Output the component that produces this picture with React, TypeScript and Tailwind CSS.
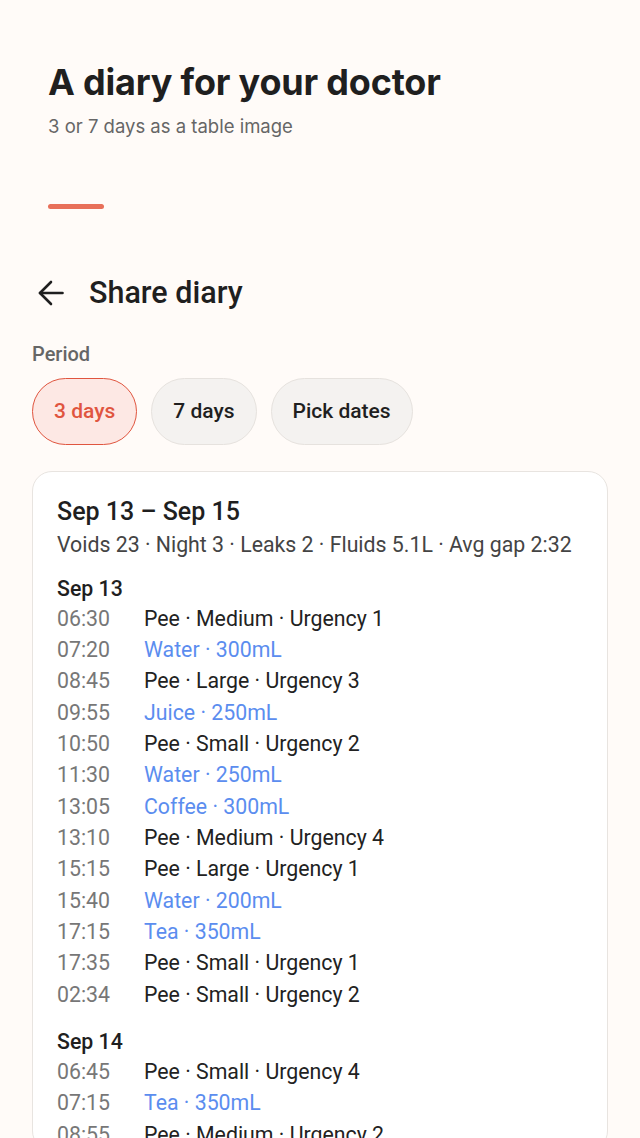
type Entry = { time: string; text: string; drink?: boolean };

const days: { label: string; entries: Entry[] }[] = [
  {
    label: "Sep 13",
    entries: [
      { time: "06:30", text: "Pee · Medium · Urgency 1" },
      { time: "07:20", text: "Water · 300mL", drink: true },
      { time: "08:45", text: "Pee · Large · Urgency 3" },
      { time: "09:55", text: "Juice · 250mL", drink: true },
      { time: "10:50", text: "Pee · Small · Urgency 2" },
      { time: "11:30", text: "Water · 250mL", drink: true },
      { time: "13:05", text: "Coffee · 300mL", drink: true },
      { time: "13:10", text: "Pee · Medium · Urgency 4" },
      { time: "15:15", text: "Pee · Large · Urgency 1" },
      { time: "15:40", text: "Water · 200mL", drink: true },
      { time: "17:15", text: "Tea · 350mL", drink: true },
      { time: "17:35", text: "Pee · Small · Urgency 1" },
      { time: "02:34", text: "Pee · Small · Urgency 2" },
    ],
  },
  {
    label: "Sep 14",
    entries: [
      { time: "06:45", text: "Pee · Small · Urgency 4" },
      { time: "07:15", text: "Tea · 350mL", drink: true },
      { time: "08:55", text: "Pee · Medium · Urgency 2" },
    ],
  },
];

const periods = ["3 days", "7 days", "Pick dates"];

function BackArrow() {
  return (
    <svg width="26" height="26" viewBox="0 0 26 26" fill="none" stroke="#1f1f1f" strokeWidth="2.6" strokeLinecap="round" strokeLinejoin="round">
      <path d="M24.5 13H2" />
      <path d="M13 2L2 13l11 11" />
    </svg>
  );
}

export default function App() {
  return (
    <div className="h-[1138px] overflow-hidden bg-[#fffbf8] font-['Roboto',sans-serif]">
      <header className="px-12 pt-[59px]">
        <h1 className="font-['Inter',sans-serif] text-[36px] font-bold leading-[46px] tracking-[-0.2px] text-[#1f1f1f]">
          A diary for your doctor
        </h1>
        <p className="mt-[9px] font-['Inter',sans-serif] text-[18.5px] leading-6 text-[#666]">
          3 or 7 days as a table image
        </p>
        <div className="mt-[66px] h-[5px] w-14 rounded-full bg-[#e8705a]" />
      </header>

      <main className="px-8">
        <div className="mt-[64px] flex items-center gap-[25px] pl-[6px]">
          <BackArrow />
          <h2 className="text-[30.5px] font-medium leading-10 text-[#1f1f1f]">Share diary</h2>
        </div>

        <div className="mt-[27px] text-[20px] font-medium leading-7 text-[#666]">Period</div>
        <div className="mt-[10px] flex gap-[14px]">
          {periods.map((p, i) => (
            <button
              key={p}
              className={
                i === 0
                  ? "h-[67px] rounded-full border border-[#e0553f] bg-[#fde8e4] px-[21px] text-[21px] font-medium text-[#e0553f]"
                  : "h-[67px] rounded-full border border-[#e6e2de] bg-[#f4f2f0] px-[21px] text-[21px] font-medium text-[#1f1f1f]"
              }
            >
              {p}
            </button>
          ))}
        </div>

        <section className="mt-[26px] rounded-[20px] border border-[#e8e4e0] bg-white px-6 pt-[24px]">
          <h3 className="text-[25px] font-medium leading-8 text-[#1f1f1f]">Sep 13 – Sep 15</h3>
          <p className="mt-[2px] text-[21.3px] leading-[30px] text-[#444]">
            Voids 23 · Night 3 · Leaks 2 · Fluids 5.1L · Avg gap 2:32
          </p>
          <div className="mt-[15px] flex flex-col gap-[18px]">
            {days.map((d) => (
              <div key={d.label}>
                <div className="text-[21.3px] font-medium leading-[28px] text-[#1f1f1f]">{d.label}</div>
                <div className="flex flex-col">
                  {d.entries.map((e, idx) => (
                    <div key={idx} className="flex h-[31.33px] items-center text-[21.3px]">
                      <span className="w-[87px] text-[#777]">{e.time}</span>
                      <span className={e.drink ? "text-[#5b8def]" : "text-[#222]"}>{e.text}</span>
                    </div>
                  ))}
                </div>
              </div>
            ))}
          </div>
        </section>
      </main>
    </div>
  );
}
